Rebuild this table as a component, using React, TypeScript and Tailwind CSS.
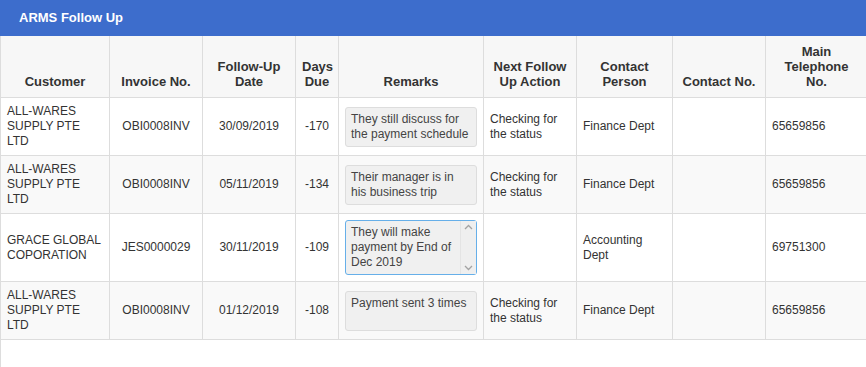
import React from "react";

type Row = {
  customer: string;
  invoice: string;
  date: string;
  days: string;
  remarks: string;
  next: string;
  person: string;
  contact: string;
  phone: string;
  focused?: boolean;
};

const rows: Row[] = [
  {
    customer: "ALL-WARES SUPPLY PTE LTD",
    invoice: "OBI0008INV",
    date: "30/09/2019",
    days: "-170",
    remarks: "They still discuss for the payment schedule",
    next: "Checking for the status",
    person: "Finance Dept",
    contact: "",
    phone: "65659856",
  },
  {
    customer: "ALL-WARES SUPPLY PTE LTD",
    invoice: "OBI0008INV",
    date: "05/11/2019",
    days: "-134",
    remarks: "Their manager is in his business trip",
    next: "Checking for the status",
    person: "Finance Dept",
    contact: "",
    phone: "65659856",
  },
  {
    customer: "GRACE GLOBAL COPORATION",
    invoice: "JES0000029",
    date: "30/11/2019",
    days: "-109",
    remarks: "They will make payment by End of Dec 2019",
    next: "",
    person: "Accounting Dept",
    contact: "",
    phone: "69751300",
    focused: true,
  },
  {
    customer: "ALL-WARES SUPPLY PTE LTD",
    invoice: "OBI0008INV",
    date: "01/12/2019",
    days: "-108",
    remarks: "Payment sent 3 times",
    next: "Checking for the status",
    person: "Finance Dept",
    contact: "",
    phone: "65659856",
  },
];

const th =
  "border border-[#dddddd] border-t-0 py-2 align-bottom text-center font-bold text-[13px] leading-[15px] text-[#333]";
const td =
  "border border-[#dddddd] px-[6px] py-[6px] align-middle text-[12px] leading-[15px] text-[#333]";

function Remarks({ text, focused }: { text: string; focused?: boolean }) {
  if (focused) {
    return (
      <div className="flex w-[132px] rounded-[3px] border border-[#66afe9] bg-[#f0f0f0]">
        <div className="flex-1 py-[4px] pl-[5px] pr-[2px] text-[12px] leading-[15px] text-[#444]">
          {text}
        </div>
        <div className="flex w-[16px] flex-col items-center justify-between border-l border-[#e4e4e4] bg-[#efefef] py-[3px]">
          <svg width="9" height="6" viewBox="0 0 9 6">
            <path d="M1 5 L4.5 1.5 L8 5" fill="none" stroke="#a3a3a3" strokeWidth="1.3" />
          </svg>
          <svg width="9" height="6" viewBox="0 0 9 6">
            <path d="M1 1 L4.5 4.5 L8 1" fill="none" stroke="#a3a3a3" strokeWidth="1.3" />
          </svg>
        </div>
      </div>
    );
  }
  return (
    <div className="h-[40px] w-[132px] rounded-[3px] border border-[#dddddd] bg-[#f0f0f0] px-[5px] py-[4px] text-[12px] leading-[15px] text-[#444]">
      {text}
    </div>
  );
}

export default function App() {
  return (
    <div className="h-[367px] w-[866px] overflow-hidden bg-white font-['Liberation_Sans',Arial,sans-serif]">
      <div className="flex h-[36px] items-center bg-[#3d6dcc] pl-[19px] text-[13px] font-bold text-white">
        ARMS Follow Up
      </div>
      <div className="h-[331px] border-l border-[#dddddd]">
        <table className="-ml-px w-[867px] table-fixed border-collapse">
          <colgroup>
            <col className="w-[109px]" />
            <col className="w-[93px]" />
            <col className="w-[93px]" />
            <col className="w-[43px]" />
            <col className="w-[145px]" />
            <col className="w-[93px]" />
            <col className="w-[96px]" />
            <col className="w-[93px]" />
            <col className="w-[102px]" />
          </colgroup>
          <thead>
            <tr className="bg-[#f7f7f7]">
              <th className={th + " px-[6px]"}>Customer</th>
              <th className={th + " px-[6px]"}>Invoice No.</th>
              <th className={th + " px-[6px]"}>Follow-Up Date</th>
              <th className={th + " px-[6px]"}>Days Due</th>
              <th className={th + " px-[6px]"}>Remarks</th>
              <th className={th + " px-[6px]"}>Next Follow Up Action</th>
              <th className={th + " px-[6px]"}>Contact Person</th>
              <th className={th + " px-[6px]"}>Contact No.</th>
              <th className={th + " px-[9px]"}>Main Telephone No.</th>
            </tr>
          </thead>
          <tbody>
            {rows.map((r, i) => (
              <tr key={i} className={i % 2 === 1 ? "bg-[#f9f9f9]" : "bg-white"}>
                <td className={td}>{r.customer}</td>
                <td className={td + " text-center"}>{r.invoice}</td>
                <td className={td + " text-center"}>{r.date}</td>
                <td className={td + " text-center"}>{r.days}</td>
                <td className={td}>
                  <Remarks text={r.remarks} focused={r.focused} />
                </td>
                <td className={td}>{r.next}</td>
                <td className={td}>{r.person}</td>
                <td className={td}>{r.contact}</td>
                <td className={td}>{r.phone}</td>
              </tr>
            ))}
          </tbody>
        </table>
      </div>
    </div>
  );
}
